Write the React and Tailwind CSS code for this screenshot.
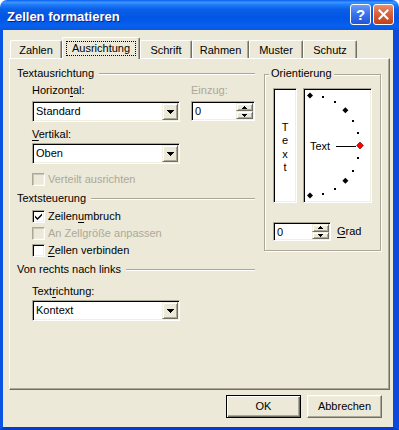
import React from "react";

// classic 3D edges
const sunken =
  "border border-t-[#ACA899] border-l-[#ACA899] border-r-white border-b-white shadow-[inset_1px_1px_0_#000,inset_-1px_-1px_0_#F1EFE2]";
const sunkenOff =
  "border border-t-[#ACA899] border-l-[#ACA899] border-r-white border-b-white shadow-[inset_1px_1px_0_#C9C6B6,inset_-1px_-1px_0_#F1EFE2]";
const raised =
  "bg-[#ECE9D8] border border-t-[#F1EFE2] border-l-[#F1EFE2] border-r-[#716F64] border-b-[#716F64] shadow-[inset_1px_1px_0_#fff,inset_-1px_-1px_0_#ACA899]";

const U = ({ children }) => (
  <span className="underline underline-offset-[2px]">{children}</span>
);

const Down = ({ w = 7, h = 4 }) => (
  <svg width={w} height={h} viewBox={`0 0 ${w} ${h}`} shapeRendering="crispEdges">
    <path d={`M0 0H${w}L${w / 2} ${h}Z`} fill="#000" />
  </svg>
);

const Up = ({ w = 5, h = 3 }) => (
  <svg width={w} height={h} viewBox={`0 0 ${w} ${h}`} shapeRendering="crispEdges">
    <path d={`M0 ${h}H${w}L${w / 2} 0Z`} fill="#000" />
  </svg>
);

const Combo = ({ value }) => (
  <div className={`flex w-[148px] h-[21px] bg-white p-[1px] ${sunken}`}>
    <span className="flex-1 pl-[2px] leading-[17px]">{value}</span>
    <span className={`w-[16px] h-[17px] flex items-center justify-center ${raised}`}>
      <Down />
    </span>
  </div>
);

const Spin = ({ className }) => (
  <div className={`flex bg-white p-[1px] ${sunken} ${className}`}>
    <span className="flex-1 pl-[2px] leading-[16px]">0</span>
    <div className="flex flex-col w-[17px]">
      <span className={`flex-1 flex items-center justify-center ${raised}`}>
        <Up />
      </span>
      <span className={`flex-1 flex items-center justify-center ${raised}`}>
        <Down w={5} h={3} />
      </span>
    </div>
  </div>
);

const Check = ({ checked, disabled, children }) => (
  <div className="flex items-center h-[17px] ml-[15px]">
    <span
      className={`w-[13px] h-[13px] flex items-center justify-center ${
        disabled ? `bg-[#ECE9D8] ${sunkenOff}` : `bg-white ${sunken}`
      }`}
    >
      {checked && (
        <svg width="7" height="7" viewBox="0 0 7 7">
          <polygon points="0,2.5 2.5,5 7,0.5 7,2.5 2.5,7 0,4.5" fill="#000" />
        </svg>
      )}
    </span>
    <span className={`ml-[3px] ${disabled ? "text-[#ACA899]" : ""}`}>{children}</span>
  </div>
);

const Head = ({ children, className = "" }) => (
  <div className={`flex items-center h-[13px] ${className}`}>
    <span>{children}</span>
    <span className="flex-1 ml-[5px] h-[2px] border-t border-b border-t-[#ACA899] border-b-white" />
  </div>
);

const tabs = [
  { label: "Zahlen", w: "w-[52px]" },
  { label: "Ausrichtung", w: "w-[78px]", active: true },
  { label: "Schrift", w: "w-[52px]" },
  { label: "Rahmen", w: "w-[57px]" },
  { label: "Muster", w: "w-[54px]" },
  { label: "Schutz", w: "w-[54px]" },
];

// dial points on the orientation half circle
const cx = 6;
const cy = 56.5;
const r = 50;
const dial = [90, 75, 60, 45, 30, 15, 0, -15, -30, -45, -60, -75, -90].map((a) => {
  const rad = (a * Math.PI) / 180;
  return { a, x: cx + r * Math.cos(rad), y: cy - r * Math.sin(rad) };
});

const diamond = (x, y, s) => `${x},${y - s} ${x + s},${y} ${x},${y + s} ${x - s},${y}`;

const Dial = () => (
  <div className={`relative w-[69px] h-[115px] bg-white ${sunken}`}>
    <svg className="absolute inset-0" width="67" height="113">
      {dial.map((p) =>
        p.a === 0 ? (
          <polygon key={p.a} points={diamond(p.x, p.y, 3.5)} fill="#FF0000" stroke="#800000" strokeWidth="0.6" />
        ) : p.a % 45 === 0 ? (
          <polygon key={p.a} points={diamond(p.x, p.y, 3)} fill="#000" />
        ) : (
          <rect key={p.a} x={Math.round(p.x) - 1} y={Math.round(p.y) - 1} width="2" height="2" fill="#000" shapeRendering="crispEdges" />
        )
      )}
      <line x1="32" y1="57.5" x2="52" y2="57.5" stroke="#000" strokeWidth="1" />
    </svg>
    <span className="absolute left-[6px] top-[51px] leading-[13px]">Text</span>
  </div>
);

export default function App() {
  return (
    <div className="w-[399px] h-[430px] flex flex-col font-['Liberation_Sans',Arial,sans-serif] text-[11px] leading-[13px] text-black">
      {/* title bar */}
      <div className="h-[30px] shrink-0 rounded-t-[7px] flex items-start pl-[7px] pr-[5px] bg-[linear-gradient(180deg,#0A5FF0_0%,#3D95FF_8%,#1E7BF9_16%,#0A5EE6_32%,#0055E5_60%,#0860EE_86%,#0A57DC_100%)]">
        <span className="flex-1 mt-[9px] leading-[15px] text-[13px] font-bold text-white [text-shadow:1px_1px_#0F1E82]">
          Zellen formatieren
        </span>
        <span className="mt-[4px] w-[21px] h-[21px] rounded-[3px] border border-white flex items-center justify-center bg-[linear-gradient(180deg,#6C9CF7_0%,#3B74EE_45%,#1F56DA_100%)] text-white font-bold text-[15px] leading-[15px]">
          ?
        </span>
        <span className="mt-[4px] ml-[2px] w-[21px] h-[21px] rounded-[3px] border border-white flex items-center justify-center bg-[linear-gradient(180deg,#E9906F_0%,#D9613B_45%,#C2401C_100%)]">
          <svg width="11" height="11" viewBox="0 0 11 11">
            <path d="M1.5 1.5L9.5 9.5M9.5 1.5L1.5 9.5" stroke="#fff" strokeWidth="2" strokeLinecap="square" />
          </svg>
        </span>
      </div>

      {/* client area */}
      <div className="flex-1 flex flex-col bg-[#ECE9D8] border-l-[3px] border-r-[6px] border-b-[3px] border-l-[#0A54E4] border-r-[#0A4BDB] border-b-[#0A3ACB] pl-[6px] pt-[7px]">
        {/* tabs */}
        <div className="flex items-end h-[21px] pl-[1px]">
          {tabs.map((t) =>
            t.active ? (
              <div
                key={t.label}
                className={`${t.w} h-[22px] -mb-[1px] relative z-10 flex items-center justify-center bg-[#ECE9D8] border-t border-l border-r border-t-white border-l-white border-r-[#716F64] shadow-[inset_-1px_0_0_#ACA899] rounded-t-[2px]`}
              >
                <span className="border border-dotted border-black px-[5px] leading-[13px]">{t.label}</span>
              </div>
            ) : (
              <div
                key={t.label}
                className={`${t.w} h-[18px] pt-[1px] flex items-center justify-center bg-[#ECE9D8] border-t border-l border-r border-t-white border-l-white border-r-[#716F64] shadow-[inset_-1px_0_0_#ACA899] rounded-t-[2px]`}
              >
                {t.label}
              </div>
            )
          )}
        </div>

        {/* tab page */}
        <div className="w-[381px] h-[332px] flex items-start bg-[#ECE9D8] border border-t-white border-l-white border-r-[#716F64] border-b-[#716F64] shadow-[inset_-1px_-1px_0_#ACA899] pl-[7px] pt-[8px]">
          {/* left column */}
          <div className="w-[238px] flex flex-col">
            <Head>Textausrichtung</Head>
            <div className="flex mt-[4px] ml-[15px]">
              <span className="w-[159px]">
                Horizon<U>t</U>al:
              </span>
              <span className="text-[#ACA899]">Einzug:</span>
            </div>
            <div className="flex items-start mt-[4px] ml-[15px]">
              <Combo value="Standard" />
              <Spin className="ml-[11px] w-[64px] h-[20px]" />
            </div>
            <div className="mt-[6px] ml-[15px]">
              <U>V</U>ertikal:
            </div>
            <div className="mt-[2px] ml-[15px]">
              <Combo value="Oben" />
            </div>
            <div className="mt-[7px]">
              <Check disabled>Verteilt ausrichten</Check>
            </div>

            <Head className="mt-[4px]">Textsteuerung</Head>
            <div className="mt-[3px]">
              <Check checked>
                Zeilen<U>u</U>mbruch
              </Check>
              <Check disabled>An Zellgröße anpassen</Check>
              <Check>
                <U>Z</U>ellen verbinden
              </Check>
            </div>

            <Head className="mt-[4px]">Von rechts nach links</Head>
            <div className="mt-[9px] ml-[15px]">
              Text<U>r</U>ichtung:
            </div>
            <div className="mt-[2px] ml-[15px]">
              <Combo value="Kontext" />
            </div>
          </div>

          {/* Orientierung */}
          <div className="relative ml-[9px] mt-[7px] w-[117px] h-[177px] border border-[#ACA899] shadow-[inset_1px_1px_0_#fff,1px_1px_0_#fff] pl-[8px] pt-[13px]">
            <span className="absolute -top-[8px] left-[4px] px-[2px] bg-[#ECE9D8] leading-[13px]">Orientierung</span>
            <div className="flex gap-[6px]">
              <div className={`w-[24px] h-[115px] bg-white flex flex-col items-center justify-center pt-[4px] leading-[13.5px] ${sunken}`}>
                <span>T</span>
                <span>e</span>
                <span>x</span>
                <span>t</span>
              </div>
              <Dial />
            </div>
            <div className="flex items-center mt-[19px]">
              <Spin className="w-[58px] h-[19px]" />
              <span className="ml-[6px]">
                <U>G</U>rad
              </span>
            </div>
          </div>
        </div>

        {/* buttons */}
        <div className="flex justify-end gap-[6px] w-[381px] pr-[8px] mt-[5px]">
          <button
            type="button"
            className="w-[75px] h-[23px] flex items-center justify-center bg-[#ECE9D8] border border-black shadow-[inset_1px_1px_0_#fff,inset_-1px_-1px_0_#716F64,inset_-2px_-2px_0_#ACA899]"
          >
            OK
          </button>
          <button
            type="button"
            className="w-[75px] h-[23px] flex items-center justify-center bg-[#ECE9D8] border border-t-white border-l-white border-r-[#716F64] border-b-[#716F64] shadow-[inset_-1px_-1px_0_#ACA899,inset_1px_1px_0_#F1EFE2]"
          >
            Abbrechen
          </button>
        </div>
      </div>
    </div>
  );
}
